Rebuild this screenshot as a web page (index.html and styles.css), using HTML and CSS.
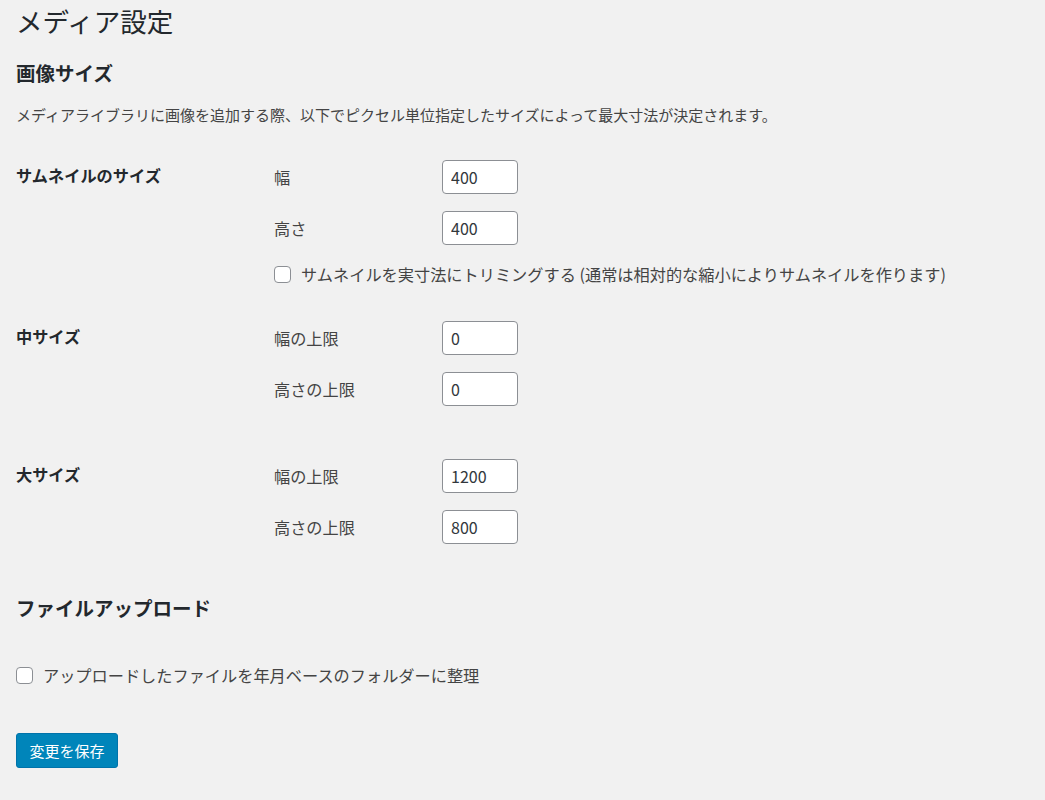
FILE: index.html
```html
<!DOCTYPE html>
<html lang="ja">
  <head>
    <meta charset="utf-8">
    <title>メディア設定</title>
    <link rel="stylesheet" href="styles.css">
  </head>
  <body>
    <div class="wrap">
      <h1 class="page-title">メディア設定</h1>

      <form class="settings">
        <h2 class="section-title">画像サイズ</h2>
        <p class="description">メディアライブラリに画像を追加する際、以下でピクセル単位指定したサイズによって最大寸法が決定されます。</p>

        <div class="group group-thumb">
          <div class="group-title">サムネイルのサイズ</div>
          <div class="group-fields">
            <label class="field">
              <span class="field-label">幅</span>
              <input class="num" type="text" value="400">
            </label>
            <label class="field">
              <span class="field-label">高さ</span>
              <input class="num" type="text" value="400">
            </label>
            <label class="check check-crop">
              <input type="checkbox">
              <span>サムネイルを実寸法にトリミングする (通常は相対的な縮小によりサムネイルを作ります)</span>
            </label>
          </div>
        </div>

        <div class="group group-medium">
          <div class="group-title">中サイズ</div>
          <div class="group-fields">
            <label class="field">
              <span class="field-label">幅の上限</span>
              <input class="num" type="text" value="0">
            </label>
            <label class="field">
              <span class="field-label">高さの上限</span>
              <input class="num" type="text" value="0">
            </label>
          </div>
        </div>

        <div class="group group-large">
          <div class="group-title">大サイズ</div>
          <div class="group-fields">
            <label class="field">
              <span class="field-label">幅の上限</span>
              <input class="num" type="text" value="1200">
            </label>
            <label class="field">
              <span class="field-label">高さの上限</span>
              <input class="num" type="text" value="800">
            </label>
          </div>
        </div>

        <h2 class="section-title section-uploads">ファイルアップロード</h2>

        <label class="check check-uploads">
          <input type="checkbox">
          <span>アップロードしたファイルを年月ベースのフォルダーに整理</span>
        </label>

        <div class="submit">
          <button type="button" class="button-primary">変更を保存</button>
        </div>
      </form>
    </div>
  </body>
</html>
```

FILE: styles.css
```css
html, body {
  margin:0;
  background:#f1f1f1;
}
body {
  font-family:"Noto Sans CJK JP", "Noto Sans", sans-serif;
  font-size:15px;
  color:#444;
}
.wrap {
  padding:4px 16px 30px;
}
.page-title {
  margin:0;
  font-size:26.5px;
  line-height:34px;
  font-weight:400;
  color:#23282d;
}
.section-title {
  margin:22px 0 0;
  font-size:19.5px;
  line-height:26px;
  font-weight:700;
  color:#23282d;
}
.description {
  margin:18px 0 0;
  line-height:22px;
}
/* the form rows use a slightly larger size than the intro text */
.group, .check {
  font-size:16.2px;
}
.group {
  display:flex;
}
.group-thumb {
  margin-top:34px;
}
.group-medium {
  margin-top:36px;
}
.group-large {
  margin-top:53px;
}
.group-title {
  width:258px;
  flex-shrink:0;
  margin-top:4px;
  line-height:22px;
  font-weight:700;
  color:#23282d;
}
.group-fields {
  display:flex;
  flex-direction:column;
  gap:17px;
}
.field {
  display:flex;
  align-items:center;
  height:34px;
}
.field-label {
  width:168px;
  line-height:22px;
}
.num {
  box-sizing:border-box;
  width:76px;
  height:34px;
  margin:0;
  padding:0 8px;
  border:1px solid #8c8f94;
  border-radius:4px;
  background:#fff;
  font-family:inherit;
  font-size:16px;
  color:#32373c;
}
.check {
  display:flex;
  align-items:center;
  gap:10px;
  line-height:22px;
}
.check input {
  appearance:none;
  -webkit-appearance:none;
  box-sizing:border-box;
  width:17px;
  height:17px;
  margin:0;
  border:1px solid #8c8f94;
  border-radius:4px;
  background:#fff;
}
.check-crop {
  margin-top:1px;
}
.section-uploads {
  margin-top:51px;
}
.check-uploads {
  margin-top:43px;
}
.submit {
  margin-top:47px;
}
.button-primary {
  box-sizing:border-box;
  width:102px;
  height:35px;
  padding:0;
  border:1px solid #0073aa;
  border-radius:3px;
  background:#0085ba;
  color:#fff;
  font-family:inherit;
  font-size:15px;
}
```
